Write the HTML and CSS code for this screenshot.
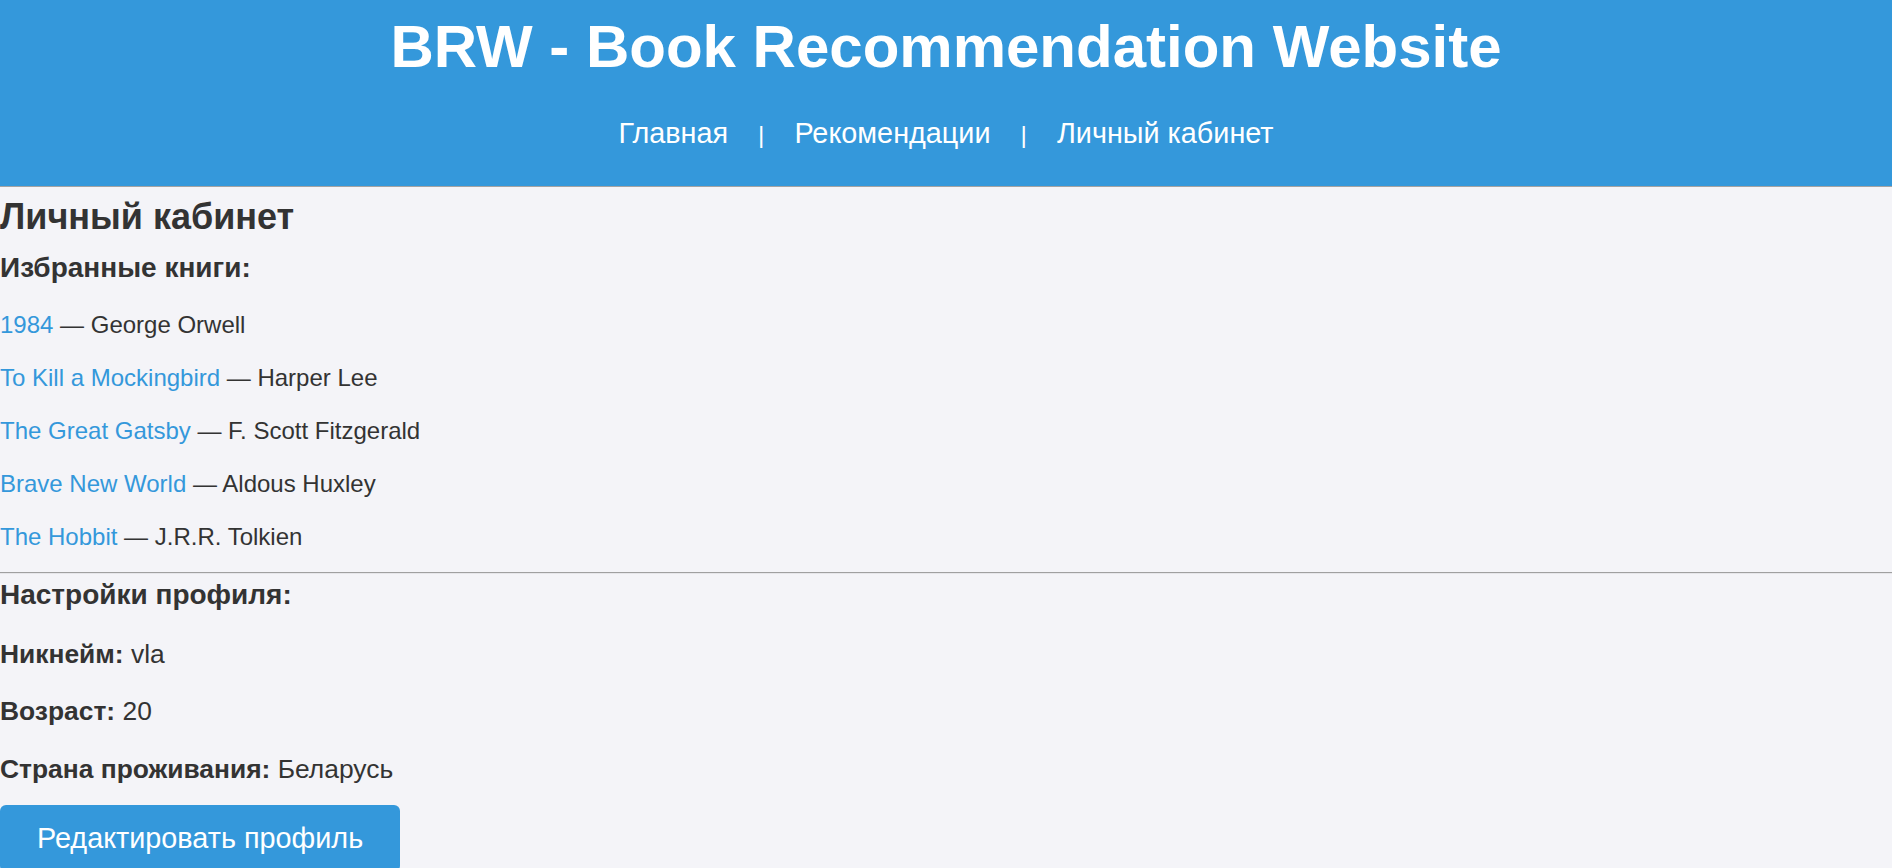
FILE: index.html
```html
<!DOCTYPE html>
<html lang="ru">
<head>
<meta charset="utf-8">
<title>BRW - Личный кабинет</title>
<link rel="stylesheet" href="styles.css">
</head>
<body>
<header class="site-header">
  <h1 class="site-title">BRW - Book Recommendation Website</h1>
  <nav class="site-nav">
    <a href="#" class="nav-link">Главная</a>
    <span class="nav-sep">|</span>
    <a href="#" class="nav-link">Рекомендации</a>
    <span class="nav-sep">|</span>
    <a href="#" class="nav-link">Личный кабинет</a>
  </nav>
</header>
<main class="content">
  <h2 class="page-title">Личный кабинет</h2>
  <h3 class="section-title">Избранные книги:</h3>
  <div class="favorites">
    <p class="book"><a href="#" class="book-link">1984</a> — George Orwell</p>
    <p class="book"><a href="#" class="book-link">To Kill a Mockingbird</a> — Harper Lee</p>
    <p class="book"><a href="#" class="book-link">The Great Gatsby</a> — F. Scott Fitzgerald</p>
    <p class="book"><a href="#" class="book-link">Brave New World</a> — Aldous Huxley</p>
    <p class="book"><a href="#" class="book-link">The Hobbit</a> — J.R.R. Tolkien</p>
  </div>
  <hr class="divider">
  <section class="profile">
    <h3 class="section-title profile-title">Настройки профиля:</h3>
    <p class="field"><strong>Никнейм:</strong> vla</p>
    <p class="field"><strong>Возраст:</strong> 20</p>
    <p class="field"><strong>Страна проживания:</strong> Беларусь</p>
  </section>
  <button class="edit-btn" type="button">Редактировать профиль</button>
</main>
</body>
</html>
```
FILE: styles.css
```css
html, body {
  margin: 0;
  padding: 0;
}
body {
  font-family: "Liberation Sans", Arial, sans-serif;
  font-size: 24px;
  color: #333;
  background: #f4f4f8;
}
.site-header {
  background: #3498db;
  color: #fff;
  text-align: center;
  padding: 11.5px 0 36px;
  border-bottom: 1px solid #a3a3a3;
}
.site-title {
  margin: 0;
  font-size: 60px;
  line-height: 69px;
  font-weight: bold;
}
.site-nav {
  margin-top: 36.5px;
  display: flex;
  justify-content: center;
  align-items: baseline;
  gap: 30px;
  font-size: 28.8px;
  line-height: 33px;
}
.nav-link {
  color: #fff;
  text-decoration: none;
}
.nav-sep {
  color: #fff;
  font-size: 24.5px;
  line-height: 24px;
}
.content {
  padding: 0;
}
.page-title {
  margin: 9px 0 15px;
  font-size: 36px;
  line-height: 41px;
}
.section-title {
  margin: 0 0 26px;
  font-size: 28px;
  line-height: 32px;
}
.favorites {
  display: flex;
  flex-direction: column;
  gap: 24px;
}
.book {
  margin: 0;
  line-height: 29px;
}
.book-link {
  color: #3498db;
  text-decoration: none;
}
.divider {
  margin: 21px 0 5px;
  border: 0;
  border-top: 1px solid #a0a0a0;
  border-bottom: 1px solid #e6e6ea;
  height: 0;
}
.profile {
  display: flex;
  flex-direction: column;
  gap: 27.5px;
}
.profile-title {
  margin: 0;
}
.field {
  margin: 0;
  font-size: 26.4px;
  line-height: 30px;
}
.edit-btn {
  margin-top: 21.5px;
  display: block;
  background: #3498db;
  color: #fff;
  border: 0;
  border-radius: 6px;
  font-family: "Liberation Sans", Arial, sans-serif;
  font-size: 28.8px;
  line-height: 33px;
  padding: 17px 37px;
  cursor: pointer;
}
```
